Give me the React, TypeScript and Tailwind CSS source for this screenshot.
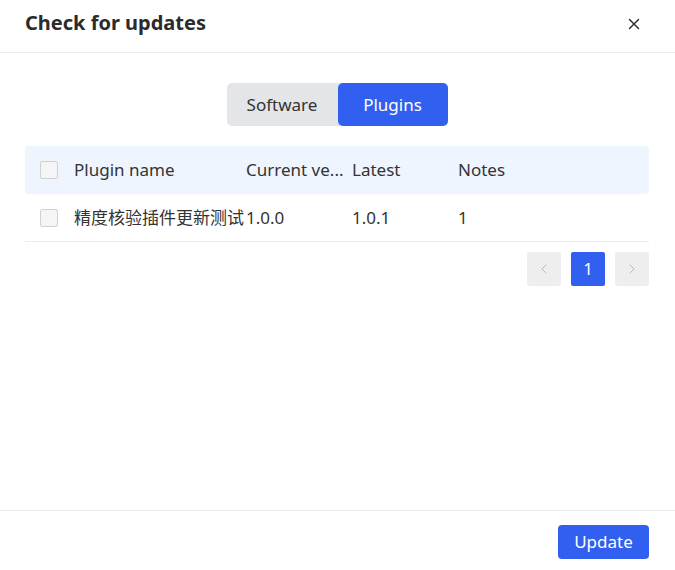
import { X, ChevronLeft, ChevronRight } from 'lucide-react';

const font = { fontFamily: '"Noto Sans", "Noto Sans CJK SC", sans-serif' };

function Box() {
  return <span className="block w-[18px] h-[18px] rounded-[2px] border border-[#d0d0d0] bg-[#f5f5f5]" />;
}

export default function App() {
  return (
    <div style={font} className="w-[675px] h-[570px] bg-white flex flex-col text-[#333]">
      <header className="h-[53px] shrink-0 border-b border-[#ececec] flex items-center justify-between pl-[25px] pr-[32px]">
        <h1 className="text-[20px] font-bold text-[#2b2b2b] -mt-[6px]">Check for updates</h1>
        <X className="w-[18px] h-[18px] text-[#333] -mt-[5px]" strokeWidth={2} />
      </header>

      <main className="flex-1 pl-[25px] pr-[26px] pt-[30px]">
        <div className="flex justify-center">
          <div className="flex rounded-[5px] bg-[#e4e5e8] text-[17px]">
            <button className="w-[111px] h-[43px] text-[#333]">Software</button>
            <button className="w-[110px] h-[43px] rounded-[5px] bg-[#3160f0] text-white">Plugins</button>
          </div>
        </div>

        <div className="mt-[20px] text-[17px]">
          <div className="h-[48px] bg-[#eef5ff] rounded-[3px] flex items-center">
            <div className="w-[49px] pl-[15px]"><Box /></div>
            <div className="w-[172px]">Plugin name</div>
            <div className="w-[106px] whitespace-nowrap">Current ve...</div>
            <div className="w-[106px]">Latest</div>
            <div>Notes</div>
          </div>
          <div className="h-[48px] border-b border-[#ececec] flex items-center">
            <div className="w-[49px] pl-[15px]"><Box /></div>
            <div className="w-[172px] whitespace-nowrap">精度核验插件更新测试</div>
            <div className="w-[106px]">1.0.0</div>
            <div className="w-[106px]">1.0.1</div>
            <div>1</div>
          </div>
        </div>

        <div className="mt-[10px] flex justify-end gap-[10px]">
          <button className="w-[34px] h-[34px] rounded-[2px] bg-[#eeeeee] flex items-center justify-center">
            <ChevronLeft className="w-[16px] h-[16px] text-[#b8b8b8]" strokeWidth={1.5} />
          </button>
          <button className="w-[34px] h-[34px] rounded-[2px] bg-[#3160f0] text-white text-[17px]">1</button>
          <button className="w-[34px] h-[34px] rounded-[2px] bg-[#eeeeee] flex items-center justify-center">
            <ChevronRight className="w-[16px] h-[16px] text-[#b8b8b8]" strokeWidth={1.5} />
          </button>
        </div>
      </main>

      <footer className="h-[60px] shrink-0 border-t border-[#ececec] flex items-start justify-end pr-[26px] pt-[14px]">
        <button className="w-[91px] h-[34px] rounded-[4px] bg-[#3160f0] text-white text-[17px]">Update</button>
      </footer>
    </div>
  );
}
